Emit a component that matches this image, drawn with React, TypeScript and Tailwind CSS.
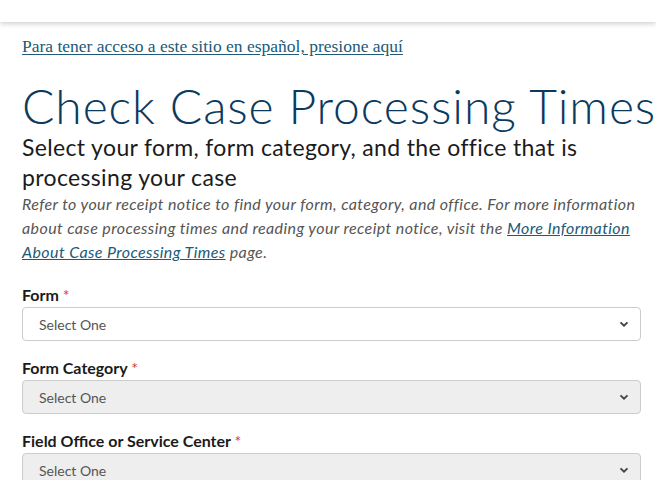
const SANS = "font-['Lato','Open_Sans',sans-serif]";

function Chevron() {
  return (
    <svg width="10" height="10" viewBox="0 0 10 10" className="shrink-0">
      <path d="M1.5 3.4 L5 6.6 L8.5 3.4" fill="none" stroke="#444" strokeWidth="1.9" />
    </svg>
  );
}

function Field({ label, disabled }: { label: string; disabled?: boolean }) {
  return (
    <div className="mb-[17px]">
      <label className="block text-[16px] font-bold leading-[20px] text-[#1b1b1b]">
        {label} <span className="font-normal text-[#d83933]">*</span>
      </label>
      <div
        className={`mt-[2px] flex h-[34px] items-center justify-between rounded-[4px] border border-[#cccccc] pl-[16px] pr-[11px] text-[14px] text-[#555555] ${
          disabled ? "bg-[#eeeeee]" : "bg-white"
        }`}
      >
        <span>Select One</span>
        <Chevron />
      </div>
    </div>
  );
}

export default function App() {
  return (
    <div className={`h-[480px] w-[656px] overflow-hidden bg-white ${SANS}`}>
      {/* Header strip */}
      <div className="h-[22px] bg-white shadow-[0_2px_5px_rgba(0,0,0,0.18)]" />

      <div className="pl-[22px] pr-[15px]">
        <a
          href="#"
          className="mt-[14px] block font-['Liberation_Serif',serif] text-[17.5px] leading-[20px] text-[#205a78] underline underline-offset-2"
        >
          Para tener acceso a este sitio en español, presione aquí
        </a>

        <h1 className="mt-[23px] whitespace-nowrap text-[48px] font-light leading-[53px] tracking-[0.9px] text-[#0b3a5e]">
          Check Case Processing Times
        </h1>

        <h2 className="text-[23px] leading-[30px] tracking-[0.35px] text-[#1b1b1b]">
          Select your form, form category, and the office that is processing your case
        </h2>

        <p className="text-[16px] italic leading-[24px] tracking-[0.4px] text-[#555555]">
          Refer to your receipt notice to find your form, category, and office. For more information
          about case processing times and reading your receipt notice, visit the{" "}
          <a href="#" className="text-[#205a78] underline">
            More Information About Case Processing Times
          </a>{" "}
          page.
        </p>

        <div className="mt-[21px]">
          <Field label="Form" />
          <Field label="Form Category" disabled />
          <Field label="Field Office or Service Center" disabled />
        </div>
      </div>
    </div>
  );
}
